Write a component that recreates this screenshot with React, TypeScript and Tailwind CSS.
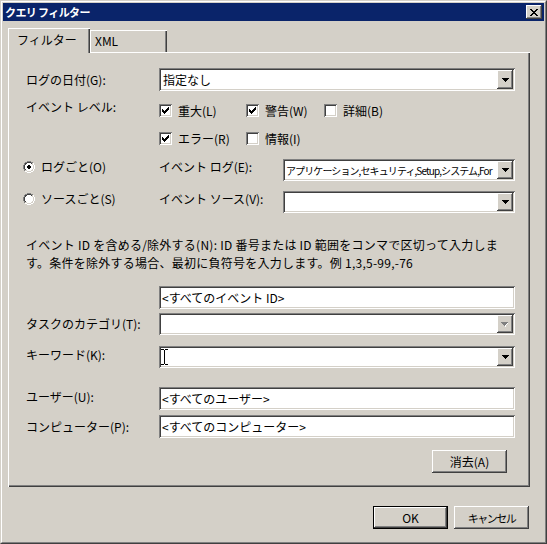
import React from "react";

const FONT = "font-['Noto_Sans_CJK_JP','Noto_Sans_CJK_SC',sans-serif]";
const SUNKEN =
  "shadow-[inset_1px_1px_0_#808080,inset_-1px_-1px_0_#ffffff,inset_2px_2px_0_#404040,inset_-2px_-2px_0_#d4d0c8]";
const RAISED =
  "shadow-[inset_-1px_-1px_0_#404040,inset_1px_1px_0_#ffffff,inset_-2px_-2px_0_#808080,inset_2px_2px_0_#d4d0c8]";

function Pix({ rows, colors }: { rows: string[]; colors: Record<string, string> }) {
  const w = rows[0].length;
  const h = rows.length;
  const rects: React.ReactNode[] = [];
  rows.forEach((r, y) =>
    r.split("").forEach((c, x) => {
      if (colors[c]) rects.push(<rect key={`${x}-${y}`} x={x} y={y} width={1} height={1} fill={colors[c]} />);
    })
  );
  return (
    <svg width={w} height={h} viewBox={`0 0 ${w} ${h}`} shapeRendering="crispEdges" className="block shrink-0">
      {rects}
    </svg>
  );
}

const CLOSE = ["##....##", ".##..##.", "..####..", "...##...", "..####..", ".##..##.", "##....##"];
const CHECK = ["......#", ".....##", "#...###", "##.###.", "#####..", ".###...", "..#...."];
const ARROW = ["#######", ".#####.", "..###..", "...#..."];
const ARROW_DIS = ["#######.", ".#####w.", "..###w..", "...#w...", "....w..."];

function radioRows(checked: boolean): string[] {
  const rows: string[] = [];
  for (let y = 0; y < 12; y++) {
    let r = "";
    for (let x = 0; x < 12; x++) {
      const dx = x + 0.5 - 6;
      const dy = y + 0.5 - 6;
      const d = Math.sqrt(dx * dx + dy * dy);
      const tl = x + y <= 10;
      if (d > 6.0) r += ".";
      else if (d > 5.0) r += tl ? "G" : "W";
      else if (d > 3.9) r += tl ? "D" : "L";
      else if (checked && d <= 2.0) r += "B";
      else r += "W";
    }
    rows.push(r);
  }
  return rows;
}

function Radio({ checked }: { checked: boolean }) {
  return (
    <Pix
      rows={radioRows(checked)}
      colors={{ G: "#808080", W: "#ffffff", D: "#404040", L: "#d4d0c8", B: "#000000" }}
    />
  );
}

function Check({ checked }: { checked: boolean }) {
  return (
    <div className={`w-[13px] h-[13px] bg-white ${SUNKEN} flex items-center justify-center shrink-0`}>
      {checked ? <Pix rows={CHECK} colors={{ "#": "#000000" }} /> : null}
    </div>
  );
}

function DropBtn({ disabled }: { disabled?: boolean }) {
  return (
    <div className={`w-[16px] h-full bg-[#d4d0c8] ${RAISED} flex items-center justify-center shrink-0`}>
      {disabled ? (
        <Pix rows={ARROW_DIS} colors={{ "#": "#808080", w: "#ffffff" }} />
      ) : (
        <Pix rows={ARROW} colors={{ "#": "#000000" }} />
      )}
    </div>
  );
}

function CheckItem({ checked, label }: { checked: boolean; label: string }) {
  return (
    <div className="flex items-center h-[13px]">
      <Check checked={checked} />
      <span className="ml-[6px] leading-[14px] whitespace-nowrap">{label}</span>
    </div>
  );
}

export default function App() {
  return (
    <div
      className={`w-[547px] h-[544px] bg-[#d4d0c8] ${FONT} text-[12px] text-black border border-t-[#d4d0c8] border-l-[#d4d0c8] border-r-[#404040] border-b-[#404040]`}
    >
      <div className="h-full border border-t-white border-l-white border-r-[#808080] border-b-[#808080] p-px flex flex-col">
        {/* Title bar */}
        <div className="h-[18px] bg-[#0a246a] flex items-center pl-[2px] pr-[2px] shrink-0">
          <span className="text-white font-bold text-[11px] tracking-[-0.6px] leading-[14px] whitespace-pre">クエリ フィルター</span>
          <div className={`ml-auto w-[16px] h-[14px] bg-[#d4d0c8] ${RAISED} flex items-center justify-center`}>
            <Pix rows={CLOSE} colors={{ "#": "#000000" }} />
          </div>
        </div>

        {/* Tabs */}
        <div className="mt-[7px] ml-[5px] flex items-end h-[24px]">
          <div className="relative z-10 w-[82px] h-[25px] -mb-px bg-[#d4d0c8] shadow-[inset_1px_1px_0_#ffffff,inset_-1px_0_0_#404040,inset_-2px_0_0_#808080] flex items-center pl-[9px] pb-[1px] leading-[14px]">
            フィルター
          </div>
          <div className="w-[77px] h-[22px] bg-[#d4d0c8] shadow-[inset_1px_1px_0_#ffffff,inset_-1px_0_0_#404040,inset_-2px_0_0_#808080] flex items-center pl-[5px] leading-[14px]">
            XML
          </div>
        </div>

        {/* Panel */}
        <div className="ml-[5px] w-[522px] h-[435px] shrink-0 pt-px pl-px shadow-[inset_1px_1px_0_#ffffff,inset_-1px_-1px_0_#404040,inset_-2px_-2px_0_#808080] flex flex-col">
          {/* Date */}
          <div className="mt-[15px] flex h-[23px] items-center">
            <div className="w-[150px] pl-[17px] leading-[14px]">ログの日付(G):</div>
            <div className={`w-[356px] h-[23px] bg-white ${SUNKEN} p-[2px] flex`}>
              <div className="flex-1 flex items-center pl-[2px] leading-[14px]">指定なし</div>
              <DropBtn />
            </div>
          </div>

          {/* Level row 1 */}
          <div className="mt-[13px] flex h-[13px] items-start">
            <div className="w-[150px] pl-[17px] -mt-[4px] leading-[14px]">イベント レベル:</div>
            <div className="grid grid-cols-[87px_78px_auto]">
              <CheckItem checked label="重大(L)" />
              <CheckItem checked label="警告(W)" />
              <CheckItem checked={false} label="詳細(B)" />
            </div>
          </div>

          {/* Level row 2 */}
          <div className="mt-[15px] flex h-[13px] items-start">
            <div className="w-[150px]" />
            <div className="grid grid-cols-[87px_78px_auto]">
              <CheckItem checked label="エラー(R)" />
              <CheckItem checked={false} label="情報(I)" />
            </div>
          </div>

          {/* Radio row 1 */}
          <div className="mt-[14px] flex h-[22px] items-start">
            <div className="w-[150px] pl-[14px] flex items-start">
              <div className="mt-[2px]">
                <Radio checked />
              </div>
              <span className="ml-[6px] mt-[1px] leading-[14px]">ログごと(O)</span>
            </div>
            <div className="w-[124px] mt-[1px] leading-[14px]">イベント ログ(E):</div>
            <div className={`w-[232px] h-[22px] bg-white ${SUNKEN} p-[2px] flex`}>
              <div className="flex-1 overflow-hidden whitespace-nowrap flex items-center pl-[1px] text-[10px] tracking-[-0.9px] leading-[13px]">
                アプリケーション,セキュリティ,Setup,システム,For
              </div>
              <DropBtn />
            </div>
          </div>

          {/* Radio row 2 */}
          <div className="mt-[10px] flex h-[22px] items-start">
            <div className="w-[150px] pl-[14px] flex items-start">
              <div className="mt-[2px]">
                <Radio checked={false} />
              </div>
              <span className="ml-[6px] mt-[1px] leading-[14px]">ソースごと(S)</span>
            </div>
            <div className="w-[124px] mt-[1px] leading-[14px]">イベント ソース(V):</div>
            <div className={`w-[232px] h-[22px] bg-white ${SUNKEN} p-[2px] flex`}>
              <div className="flex-1" />
              <DropBtn />
            </div>
          </div>

          {/* Description */}
          <div className="mt-[23px] pl-[17px] leading-[18px] tracking-[0.25px]">
            <div className="whitespace-nowrap">
              イベント ID を含める/除外する(N): ID 番号または ID 範囲をコンマで区切って入力しま
            </div>
            <div className="whitespace-nowrap">す。条件を除外する場合、最初に負符号を入力します。例 1,3,5-99,-76</div>
          </div>

          {/* Event ID */}
          <div className="mt-[14px] flex h-[23px]">
            <div className="w-[150px]" />
            <div className={`w-[356px] h-[23px] bg-white ${SUNKEN} p-[2px] flex items-center pl-[3px] leading-[14px]`}>
              &lt;すべてのイベント ID&gt;
            </div>
          </div>

          {/* Task category */}
          <div className="mt-[4px] flex h-[22px] items-center">
            <div className="w-[150px] pl-[17px] leading-[14px]">タスクのカテゴリ(T):</div>
            <div className={`w-[356px] h-[22px] bg-white ${SUNKEN} p-[2px] flex`}>
              <div className="flex-1" />
              <DropBtn disabled />
            </div>
          </div>

          {/* Keyword */}
          <div className="mt-[11px] flex h-[22px] items-start">
            <div className="w-[150px] pl-[17px] mt-[2px] leading-[14px]">キーワード(K):</div>
            <div className={`relative w-[356px] h-[22px] bg-white ${SUNKEN} p-[2px] flex`}>
              <div className="flex-1" />
              <DropBtn />
              <div className="absolute left-[2px] top-[3px]">
                <Pix
                  rows={[
                    "###.###",
                    "...#...",
                    "...#...",
                    "...#...",
                    "...#...",
                    "...#...",
                    "...#...",
                    "...#...",
                    "...#...",
                    "...#...",
                    "...#...",
                    "...#...",
                    "...#...",
                    "...#...",
                    "...#...",
                    "###.###",
                  ]}
                  colors={{ "#": "#000000" }}
                />
              </div>
            </div>
          </div>

          {/* User */}
          <div className="mt-[19px] flex h-[23px] items-start">
            <div className="w-[150px] pl-[17px] mt-[3px] leading-[14px]">ユーザー(U):</div>
            <div className={`w-[356px] h-[23px] bg-white ${SUNKEN} p-[2px] flex items-center pl-[3px] leading-[14px]`}>
              &lt;すべてのユーザー&gt;
            </div>
          </div>

          {/* Computer */}
          <div className="mt-[5px] flex h-[23px] items-center">
            <div className="w-[150px] pl-[17px] leading-[14px]">コンピューター(P):</div>
            <div className={`w-[356px] h-[23px] bg-white ${SUNKEN} p-[2px] flex items-center pl-[3px] leading-[14px]`}>
              &lt;すべてのコンピューター&gt;
            </div>
          </div>

          {/* Clear */}
          <div className="mt-[12px] flex h-[23px]">
            <div className={`ml-[423px] w-[75px] h-[23px] bg-[#d4d0c8] ${RAISED} flex items-center justify-center leading-[14px]`}>
              消去(A)
            </div>
          </div>
        </div>

        {/* Bottom buttons */}
        <div className="mt-[19px] flex justify-end gap-[6px] pr-[15px]">
          <div className="w-[75px] h-[23px] border border-black">
            <div className={`w-full h-full bg-[#d4d0c8] ${RAISED} flex items-center justify-center leading-[14px]`}>
              OK
            </div>
          </div>
          <div className={`w-[75px] h-[23px] bg-[#d4d0c8] ${RAISED} flex items-center justify-center leading-[14px] text-[11px] tracking-[-1.5px]`}>
            キャンセル
          </div>
        </div>
      </div>
    </div>
  );
}
